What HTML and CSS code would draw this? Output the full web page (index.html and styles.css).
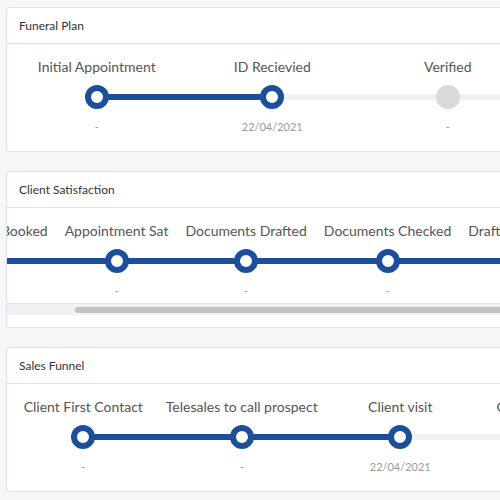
FILE: index.html
```html
<!DOCTYPE html>
<html lang="en">
<head>
<meta charset="utf-8">
<title>Progress</title>
<link rel="stylesheet" href="styles.css">
</head>
<body>
<div class="page">
  <section class="card">
    <header class="card-head">Funeral Plan</header>
    <div class="card-body">
      <div class="track track-fp">
        <div class="step first done link">
          <div class="label">Initial Appointment</div>
          <div class="node"><span class="dot"></span></div>
          <div class="date">-</div>
        </div>
        <div class="step done">
          <div class="label">ID Recievied</div>
          <div class="node"><span class="dot"></span></div>
          <div class="date">22/04/2021</div>
        </div>
        <div class="step">
          <div class="label">Verified</div>
          <div class="node"><span class="dot"></span></div>
          <div class="date">-</div>
        </div>
        <div class="step">
          <div class="label">Completed</div>
          <div class="node"><span class="dot"></span></div>
          <div class="date">-</div>
        </div>
      </div>
    </div>
  </section>

  <section class="card">
    <header class="card-head">Client Satisfaction</header>
    <div class="card-body">
      <div class="scroller">
        <div class="track track-cs">
          <div class="step auto done link">
            <div class="label">Appointment Booked</div>
            <div class="node"><span class="dot"></span></div>
            <div class="date">-</div>
          </div>
          <div class="step auto done link">
            <div class="label">Appointment Sat</div>
            <div class="node"><span class="dot"></span></div>
            <div class="date">-</div>
          </div>
          <div class="step auto done link">
            <div class="label">Documents Drafted</div>
            <div class="node"><span class="dot"></span></div>
            <div class="date">-</div>
          </div>
          <div class="step auto done link">
            <div class="label">Documents Checked</div>
            <div class="node"><span class="dot"></span></div>
            <div class="date">-</div>
          </div>
          <div class="step auto done link">
            <div class="label">Draft Documents Sent</div>
            <div class="node"><span class="dot"></span></div>
            <div class="date">-</div>
          </div>
          <div class="step auto done">
            <div class="label">Will Signed</div>
            <div class="node"><span class="dot"></span></div>
            <div class="date">-</div>
          </div>
        </div>
      </div>
      <div class="scrollbar"><div class="thumb"></div></div>
    </div>
  </section>

  <section class="card">
    <header class="card-head">Sales Funnel</header>
    <div class="card-body">
      <div class="track track-sf">
        <div class="step first done link">
          <div class="label">Client First Contact</div>
          <div class="node"><span class="dot"></span></div>
          <div class="date">-</div>
        </div>
        <div class="step done link">
          <div class="label">Telesales to call prospect</div>
          <div class="node"><span class="dot"></span></div>
          <div class="date">-</div>
        </div>
        <div class="step done">
          <div class="label">Client visit</div>
          <div class="node"><span class="dot"></span></div>
          <div class="date">22/04/2021</div>
        </div>
        <div class="step">
          <div class="label">Contract Completed</div>
          <div class="node"><span class="dot"></span></div>
          <div class="date">-</div>
        </div>
      </div>
    </div>
  </section>
</div>
</body>
</html>
```
FILE: styles.css
```css
html, body {
  margin: 0;
  padding: 0;
  background: #f4f6f8;
  overflow: hidden;
}
body {
  font-family: Lato, "Open Sans", sans-serif;
  color: #555;
}
.page {
  width: 780px;
  padding: 7px 0 0 6px;
}
.card {
  background: #fff;
  border: 1px solid #dbe3ea;
  border-radius: 3px;
  margin-bottom: 19px;
}
.card-head {
  height: 35px;
  line-height: 35px;
  padding: 0 12px;
  font-size: 12px;
  color: #333;
  border-bottom: 1px solid #dbe3ea;
}
.card-body {
  padding-bottom: 12px;
  overflow: hidden;
}
.track {
  display: flex;
  padding: 13px 0 4px;
}
.track-fp { padding-left: 2px; }
.track-fp .step { flex: 0 0 175.5px; }
.track-sf { margin-left: -3px; }
.track-sf .step { flex: 0 0 158.5px; }
.scroller { overflow: hidden; }
.track-cs { margin-left: -99px; }
.step.auto { flex: 0 0 auto; padding: 0 8.5px; }
.step.auto .node { margin-left: -8.5px; margin-right: -8.5px; }
.label {
  font-size: 14px;
  line-height: 20px;
  text-align: center;
  white-space: nowrap;
  color: #555;
}
.node {
  position: relative;
  height: 24px;
  margin: 8px 0 10px;
  display: flex;
  justify-content: center;
}
.node::before,
.node::after {
  content: "";
  position: absolute;
  top: 9px;
  height: 6px;
  width: 50%;
  background: #f1f1f1;
}
.node::before { left: 0; }
.node::after { right: 0; }
.step.done .node::before,
.step.link .node::after { background: #1b4f9b; }
.step.first .node::before { background: transparent; }
.dot {
  position: relative;
  z-index: 1;
  width: 24px;
  height: 24px;
  box-sizing: border-box;
  border-radius: 50%;
  background: #d9d9d9;
}
.step.done .dot {
  background: #fff;
  border: 6px solid #1b4f9b;
}
.date {
  font-size: 11px;
  line-height: 16px;
  text-align: center;
  color: #999;
}
.scrollbar {
  height: 12px;
  background: #f1f1f1;
  border-top: 1px solid #e6e6e6;
  box-sizing: border-box;
  padding: 3px 0 0 68px;
}
.thumb {
  height: 6px;
  width: 700px;
  border-radius: 3px;
  background: #c1c1c1;
}
```
